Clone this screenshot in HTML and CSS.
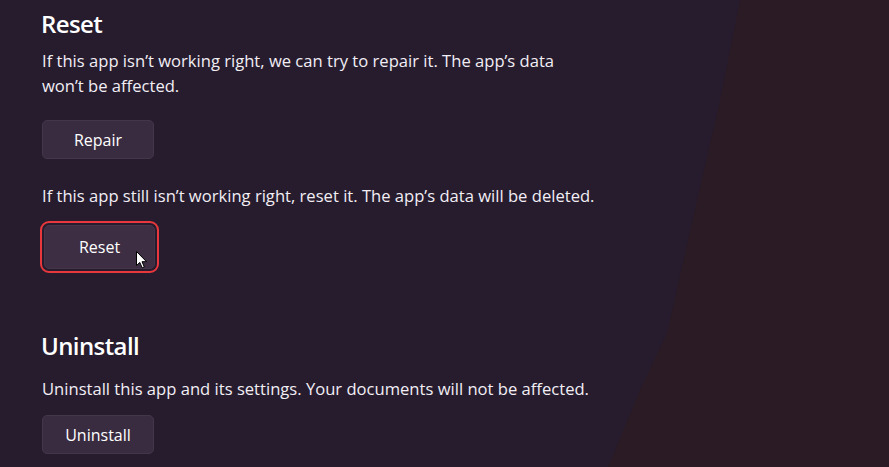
FILE: index.html
```html
<!DOCTYPE html>
<html>
<head>
    <title>App settings</title>
    <link rel="stylesheet" href="styles.css">
</head>
<body>
    <div class="settings">
        <section class="section">
            <h2>Reset</h2>
            <p class="desc desc-first wrap">If this app isn’t working right, we can try to repair it. The app’s data won’t be affected.</p>
            <button class="btn">Repair</button>
            <p class="desc desc-after">If this app still isn’t working right, reset it. The app’s data will be deleted.</p>
            <button class="btn btn-hover">
                Reset
                <svg class="cursor" width="12" height="18" viewBox="0 0 12 18">
                    <path d="M0.5 0.5 L0.5 14.5 L3.8 11.4 L6.2 16.8 L8.3 15.9 L6 10.7 L10.5 10.7 Z" fill="#fff" stroke="#000" stroke-width="1"/>
                </svg>
            </button>
        </section>

        <section class="section section-uninstall">
            <h2>Uninstall</h2>
            <p class="desc">Uninstall this app and its settings. Your documents will not be affected.</p>
            <button class="btn btn-last">Uninstall</button>
        </section>
    </div>
</body>
</html>
```

FILE: styles.css
```css
html, body {
    margin: 0;
    height: 100%;
}
body {
    background: #261c2e;
    color: #ffffff;
    font-family: "Open Sans", "Noto Sans", sans-serif;
    overflow: hidden;
    position: relative;
}
/* darker reddish wash on the right side */
body::before {
    content: "";
    position: absolute;
    inset: 0;
    background: #2a1b25;
    clip-path: polygon(740px 0, 720px 100px, 697px 200px, 667px 333px, 640px 390px, 608px 467px, 889px 467px, 889px 0);
    z-index: 0;
}
.settings {
    position: relative;
    z-index: 1;
    padding: 8px 0 0 41px;
}
.section h2 {
    font-size: 24px;
    font-weight: 600;
    letter-spacing: -0.6px;
    line-height: 32px;
    margin: 0;
}
.desc {
    font-size: 16.6px;
    line-height: 25px;
    color: #f2eef4;
    margin: 14px 0 0 1px;
}
.desc-first {
    margin-top: 8px;
}
.desc-after {
    margin-top: 24px;
}
.wrap {
    max-width: 540px;
}
.btn {
    display: block;
    position: relative;
    width: 112px;
    height: 39px;
    margin: 22px 0 0 1px;
    padding: 0;
    background: #3a2c40;
    border: 1px solid #43354a;
    border-radius: 5px;
    color: #ffffff;
    font-family: inherit;
    font-size: 16px;
}
.btn-hover {
    width: 111px;
    height: 44px;
    margin: 17px 0 0 3px;
    background: #3d2e43;
    outline: 2px solid #e8383d;
    outline-offset: 2px;
}
.btn-last {
    margin-top: 14px;
}
.cursor {
    position: absolute;
    left: 91px;
    top: 25px;
}
.section-uninstall {
    margin-top: 61px;
}
```
